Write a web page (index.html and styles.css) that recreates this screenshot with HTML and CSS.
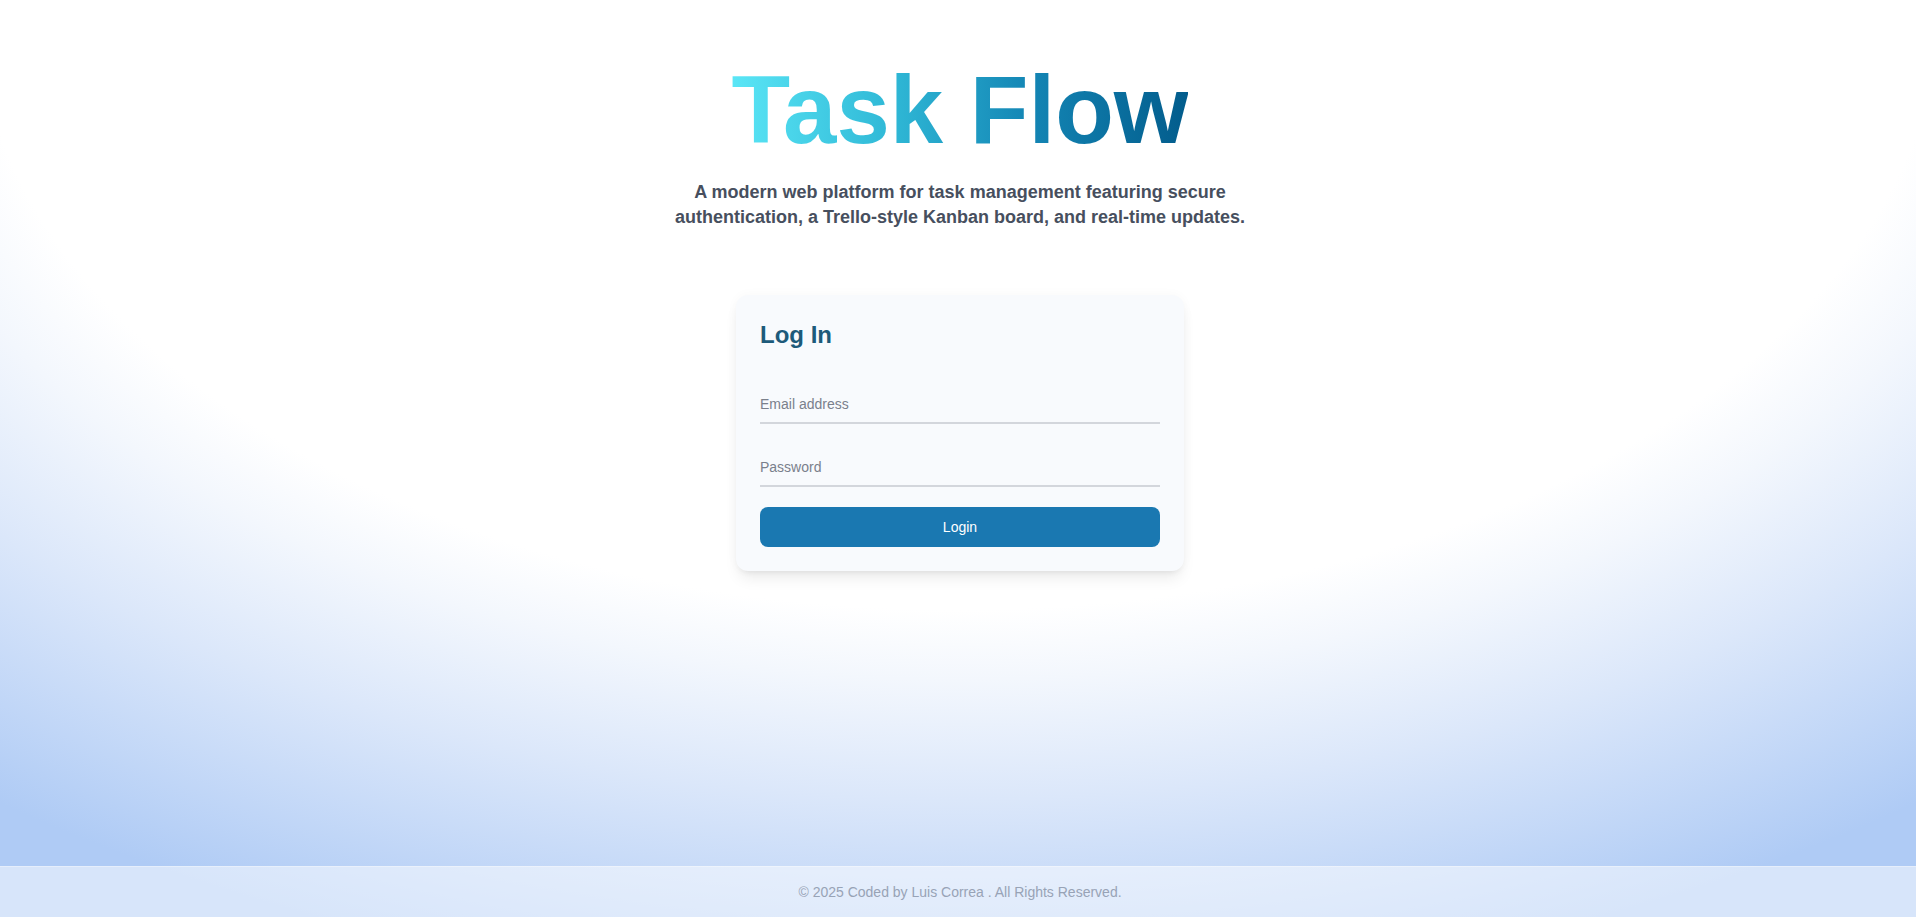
FILE: index.html
```html
<!DOCTYPE html>
<html lang="en">
<head>
<meta charset="utf-8">
<title>Task Flow</title>
<link rel="stylesheet" href="styles.css">
</head>
<body>
<div class="page">
  <main class="main">
    <h1 class="title"><span class="title-text">Task Flow</span></h1>
    <p class="subtitle">A modern web platform for task management featuring secure authentication, a Trello-style Kanban board, and real-time updates.</p>
    <section class="card">
      <h2 class="card-title">Log In</h2>
      <form class="form">
        <input class="field field-email" type="email" placeholder="Email address">
        <input class="field field-password" type="password" placeholder="Password">
        <button class="btn" type="button">Login</button>
      </form>
    </section>
  </main>
  <footer class="footer">© 2025 Coded by Luis Correa . All Rights Reserved.</footer>
</div>
</body>
</html>
```

FILE: styles.css
```css
* { box-sizing: border-box; }
html, body { margin: 0; padding: 0; height: 100%; }
body {
  font-family: "Liberation Sans", Arial, sans-serif;
  background: radial-gradient(ellipse 84% 109% at 50% 0%, #ffffff 0%, #ffffff 61%, #f3f7fd 68%, #dbe7fa 80%, #afcbf5 100%);
  background-color: #afcbf5;
  background-attachment: fixed;
}
.page {
  min-height: 100vh;
  display: flex;
  flex-direction: column;
}
.main {
  flex: 1;
  display: flex;
  flex-direction: column;
  align-items: center;
  padding-top: 62px;
  padding-left: 4px;
}
.title {
  margin: 0;
  font-size: 96px;
  line-height: 96px;
  font-weight: 700;
  text-align: center;
}
.title-text {
  display: inline-block;
  background: linear-gradient(to right, #5ae6f6 0%, #2fb8d6 35%, #1486b5 65%, #025c8c 100%);
  -webkit-background-clip: text;
  background-clip: text;
  color: transparent;
}
.subtitle {
  margin: 22px 0 0;
  max-width: 580px;
  text-align: center;
  font-size: 18px;
  line-height: 25px;
  font-weight: 700;
  color: #474f5e;
}
.card {
  margin-top: 65px;
  width: 448px;
  background: #f8fafd;
  border-radius: 12px;
  padding: 24px;
  box-shadow: 0 10px 15px -3px rgba(0,0,0,0.08), 0 4px 6px -4px rgba(0,0,0,0.08), 0 0 12px rgba(0,0,0,0.03);
}
.card-title {
  margin: 0 0 35px;
  font-size: 24px;
  line-height: 32px;
  font-weight: 700;
  color: #1d5a7a;
}
.form {
  display: flex;
  flex-direction: column;
}
.field {
  display: block;
  width: 100%;
  border: 0;
  border-bottom: 2px solid #d3d6dc;
  background: transparent;
  padding: 8px 0;
  font-family: "Liberation Sans", Arial, sans-serif;
  font-size: 14px;
  line-height: 20px;
  height: 38px;
  color: #374151;
  outline: none;
}
.field::placeholder { color: #7a808c; }
.field-password { margin-top: 25px; }
.btn {
  margin-top: 20px;
  height: 40px;
  width: 100%;
  border: 0;
  border-radius: 8px;
  background: #1a78b1;
  color: #ffffff;
  font-family: "Liberation Sans", Arial, sans-serif;
  font-size: 14px;
  font-weight: 500;
  cursor: pointer;
}
.footer {
  height: 51px;
  display: flex;
  align-items: center;
  justify-content: center;
  padding-left: 4px;
  background: rgba(255,255,255,0.5);
  border-top: 1px solid rgba(255,255,255,0.35);
  font-size: 14px;
  color: #98a3b6;
}
```
